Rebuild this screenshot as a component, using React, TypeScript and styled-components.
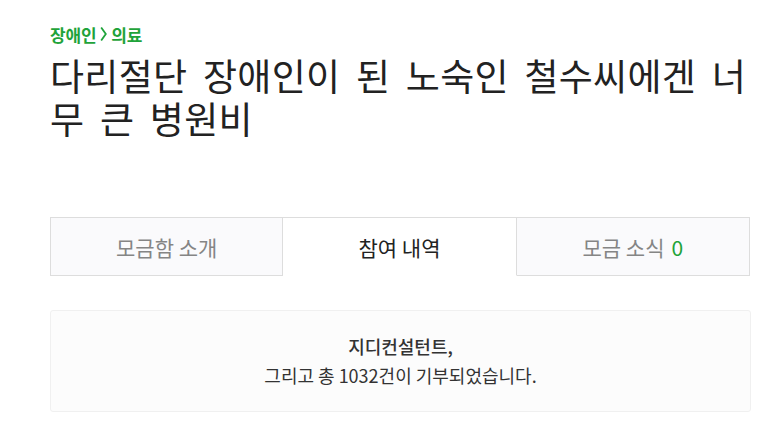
import React from "react";
import styled, { createGlobalStyle } from "styled-components";

const GlobalStyle = createGlobalStyle`
  body {
    margin: 0;
    background: #fff;
    font-family: "Noto Sans CJK KR", "Noto Sans", sans-serif;
    color: #222;
  }
`;

const tabs = [
  { label: "모금함 소개" },
  { label: "참여 내역", active: true },
  { label: "모금 소식", count: 0 },
];

export default function App() {
  return (
    <>
      <GlobalStyle />
      <Page>
        <Breadcrumb>
          장애인
          <Chevron viewBox="0 0 7 16" aria-hidden>
            <path d="M1.2 1.5 L5.8 8 L1.2 14.5" />
          </Chevron>
          의료
        </Breadcrumb>
        <Title>다리절단 장애인이 된 노숙인 철수씨에겐 너무 큰 병원비</Title>

        <Tabs>
          {tabs.map((t) => (
            <Tab key={t.label} $active={!!t.active}>
              {t.label}
              {t.count !== undefined && <Count>{t.count}</Count>}
            </Tab>
          ))}
        </Tabs>

        <Summary>
          <Donor>지디컨설턴트,</Donor>
          <Total>그리고 총 1032건이 기부되었습니다.</Total>
        </Summary>
      </Page>
    </>
  );
}

const Page = styled.div`
  width: 700px;
  padding: 20px 0 0 50px;
`;

const Breadcrumb = styled.div`
  display: flex;
  align-items: center;
  height: 28px;
  font-size: 17px;
  font-weight: 700;
  color: #1fa33a;
  letter-spacing: -0.2px;
`;

const Chevron = styled.svg`
  width: 7px;
  height: 16px;
  margin: 0 4px 0 4px;
  fill: none;
  stroke: #1fa33a;
  stroke-width: 1.8;
`;

const Title = styled.h1`
  margin: 6px 0 0;
  font-size: 37px;
  font-weight: 400;
  line-height: 43px;
  letter-spacing: 0.3px;
  word-spacing: 7px;
  color: #222;
`;

const Tabs = styled.div`
  display: grid;
  grid-template-columns: repeat(3, 1fr);
  margin-top: 77px;
`;

const Tab = styled.div<{ $active: boolean }>`
  height: 59px;
  box-sizing: border-box;
  display: flex;
  align-items: center;
  justify-content: center;
  font-size: 21px;
  color: ${(p) => (p.$active ? "#222" : "#858585")};
  background: ${(p) => (p.$active ? "#fff" : "#fafafc")};
  border: 1px solid #ddd;
  border-bottom-color: ${(p) => (p.$active ? "transparent" : "#ddd")};
  & + & {
    border-left: none;
  }
`;

const Count = styled.span`
  margin-left: 7px;
  color: #1fa33a;
`;

const Summary = styled.div`
  margin-top: 34px;
  width: 701px;
  height: 102px;
  box-sizing: border-box;
  display: flex;
  flex-direction: column;
  align-items: center;
  justify-content: center;
  background: #fcfcfc;
  border: 1px solid #f0f0f0;
  border-radius: 3px;
  font-size: 18px;
  line-height: 29px;
  color: #333;
`;

const Donor = styled.div`
  font-weight: 500;
`;

const Total = styled.div``;
